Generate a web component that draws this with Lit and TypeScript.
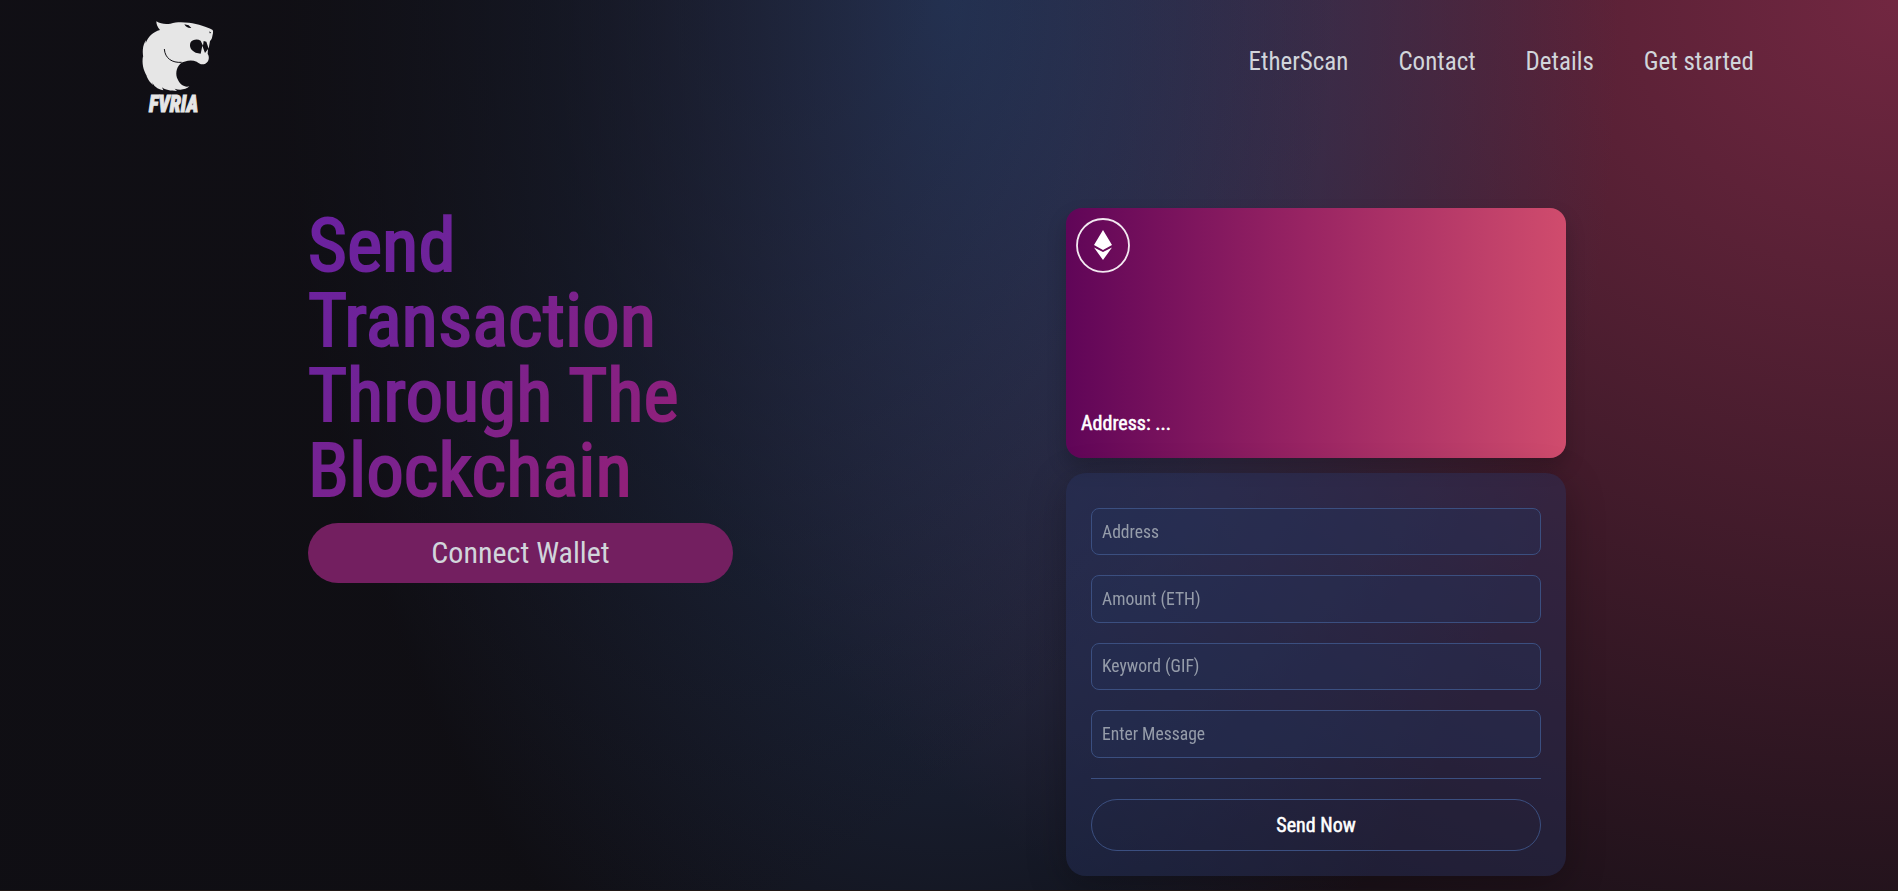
import { LitElement, html, css } from "lit";
import { customElement } from "lit/decorators.js";

@customElement("app-root")
export class AppRoot extends LitElement {
  static styles = css`
    :host { display: block; font-family: "Roboto Condensed", Roboto, "Liberation Sans Narrow", sans-serif; font-stretch: 75%; color: #d1d5db; }
    * { box-sizing: border-box; margin: 0; }
    .page {
      height: 891px; overflow: hidden; border-bottom: 1px solid #1f1715; background-color: #0f0e13;
      background-image:
        radial-gradient(at 0% 0%, hsl(253 16% 7%) 0, transparent 50%),
        radial-gradient(at 50% 0%, hsl(221 42% 29%) 0, transparent 50%),
        radial-gradient(at 100% 0%, hsl(339 49% 30%) 0, transparent 50%);
      background-size: 100% 1590px; background-repeat: no-repeat;
    }
    header { display: flex; justify-content: space-between; height: 125px; padding: 10px 144px 0 130px; }
    .logo { display: block; width: 100px; height: 115px; }
    nav { display: flex; gap: 50px; padding-top: 37px; font-size: 25px; line-height: 30px; }
    main { display: flex; justify-content: space-between; padding: 83px 332px 0 308px; }
    .hero { width: 425px; }
    h1 {
      font-size: 75px; line-height: 75px; font-weight: 400; color: transparent; -webkit-text-stroke: 2px transparent;
      background: linear-gradient(135deg, #6b21a0 0%, #6e2399 25%, #9b1f70 100%); -webkit-background-clip: text; background-clip: text;
    }
    .connect { display: block; width: 425px; height: 60px; margin-top: 15px; padding: 0 0 2px; border: 0; border-radius: 30px; background: #731f60; color: #d1d5db; font: inherit; font-size: 30px; }
    .side { width: 500px; }
    .card {
      display: flex; flex-direction: column; justify-content: space-between; height: 250px; border-radius: 16px; padding: 9px 15px 23px 10px;
      background: linear-gradient(90deg, #600558 0%, #992463 48%, #d04c6d 100%); box-shadow: 0 10px 20px rgba(0,0,0,.2); color: #fff;
    }
    .eth { display: block; width: 54px; height: 56px; }
    .addr { padding-left: 5px; font-size: 20px; line-height: 24px; -webkit-text-stroke: .5px #fff; }
    form { position: relative; margin-top: 15px; height: 403px; padding: 35px 25px 0; border-radius: 20px; background: rgba(39,51,95,.42); box-shadow: 0 10px 38px rgba(0,0,0,.26); }
    input { display: block; width: 100%; height: 47.4px; margin-bottom: 20px; padding: 0 10px; border: 1px solid #3b4f80; border-radius: 8px; background: rgba(37,49,90,.38); font: inherit; font-size: 17.6px; color: #fff; }
    input::placeholder { color: #9ca3af; opacity: .95; }
    .rule { height: 1px; background: #3b4f80; }
    .send { display: block; width: 100%; height: 52px; margin-top: 20px; border: 1px solid #3b4f80; border-radius: 26px; background: transparent; color: #fff; font: inherit; font-size: 20px; -webkit-text-stroke: .5px #fff; }
  `;
  render() {
    return html`<div class="page">
      <header>
        <svg class="logo" viewBox="0 0 300 345">
          <path fill="#e6e6e6" d="M79 34C91 42 107 43 121 41C140 35 158 36 177 38C205 42 231 50 248 60C251 66 248 73 247 79C246 87 243 91 240 93L236 116L229 95L221 93L219 107L212 92C202 86 187 89 182 97C176 110 184 123 197 128L212 131L217 107L225 129L234 117L233 132C239 140 238 155 226 161C214 166 208 160 200 155C183 148 163 153 151 161C138 173 136 194 143 208C151 225 164 233 178 229C168 240 148 241 134 236L141 243C122 243 105 240 96 232L100 241C82 237 70 227 66 215L69 225C54 212 48 198 48 186L51 199C40 181 35 160 39 139L42 151C36 129 37 106 48 91L47 100C55 79 69 66 90 60C82 51 79 43 79 34Z"/>
          <path fill="none" stroke="#0f0e13" stroke-width="3" d="M103 117C105 145 126 159 155 157"/>
          <path fill="#0f0e13" d="M163 43L176 46L184 54C175 55 168 52 163 43ZM238 64L244 69L239 70Z"/>
          <text x="57" y="307" textLength="148" lengthAdjust="spacingAndGlyphs" fill="#e6e6e6" stroke="#e6e6e6" stroke-width="3" font-family="Roboto" font-size="71" font-weight="900" font-style="italic">FVRIA</text>
        </svg>
        <nav><span>EtherScan</span><span>Contact</span><span>Details</span><span>Get started</span></nav>
      </header>
      <main>
        <section class="hero">
          <h1>Send<br>Transaction<br>Through The<br>Blockchain</h1>
          <button class="connect">Connect Wallet</button>
        </section>
        <section class="side">
          <div class="card">
            <svg class="eth" viewBox="0 0 54 56"><ellipse cx="27" cy="28.4" rx="26" ry="26.4" fill="none" stroke="#f3e9f1" stroke-width="1.8"/><path fill="#fff" d="M27 13L36 28L27 33L18 28ZM18 30.5L27 35L36 30.5L27 43Z"/></svg>
            <p class="addr">Address: ...</p>
          </div>
          <form>
            <input placeholder="Address"><input placeholder="Amount (ETH)"><input placeholder="Keyword (GIF)"><input placeholder="Enter Message">
            <div class="rule"></div>
            <button class="send" type="button">Send Now</button>
          </form>
        </section>
      </main>
    </div>`;
  }
}
